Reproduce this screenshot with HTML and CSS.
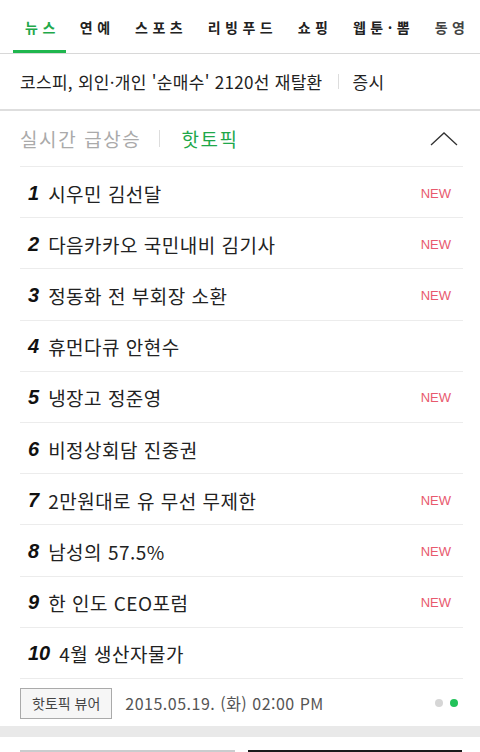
FILE: index.html
```html
<!DOCTYPE html>
<html lang="ko">
<head>
  <meta charset="UTF-8" />
  <meta name="viewport" content="width=device-width, initial-scale=1.0" />
  <title>뉴스</title>
  <link rel="stylesheet" href="styles.css">
</head>
<body>
  <nav class="tabs">
    <a class="tab active">뉴스</a>
    <a class="tab">연예</a>
    <a class="tab">스포츠</a>
    <a class="tab">리빙푸드</a>
    <a class="tab">쇼핑</a>
    <a class="tab">웹툰·뽐</a>
    <a class="tab fade">동영</a>
  </nav>

  <div class="headline">
    <span class="title">코스피, 외인·개인 '순매수' 2120선 재탈환</span>
    <span class="bar"></span>
    <span class="cat">증시</span>
  </div>

  <section class="hot">
    <div class="hot-head">
      <span class="off">실시간 급상승</span>
      <span class="bar"></span>
      <span class="on">핫토픽</span>
      <svg class="chev" width="28" height="14" viewBox="0 0 28 14"><path d="M1 13 L14 1 L27 13" fill="none" stroke="#333" stroke-width="1.3"/></svg>
    </div>

    <ol class="rank">
      <li><b>1</b><span class="kw">시우민 김선달</span><em>NEW</em></li>
      <li><b>2</b><span class="kw">다음카카오 국민내비 김기사</span><em>NEW</em></li>
      <li><b>3</b><span class="kw">정동화 전 부회장 소환</span><em>NEW</em></li>
      <li><b>4</b><span class="kw">휴먼다큐 안현수</span></li>
      <li><b>5</b><span class="kw">냉장고 정준영</span><em>NEW</em></li>
      <li><b>6</b><span class="kw">비정상회담 진중권</span></li>
      <li><b>7</b><span class="kw">2만원대로 유 무선 무제한</span><em>NEW</em></li>
      <li><b>8</b><span class="kw">남성의 57.5%</span><em>NEW</em></li>
      <li><b>9</b><span class="kw">한 인도 CEO포럼</span><em>NEW</em></li>
      <li><b>10</b><span class="kw">4월 생산자물가</span></li>
    </ol>

    <div class="hot-foot">
      <button class="viewer">핫토픽 뷰어</button>
      <span class="date">2015.05.19. (화) 02:00 PM</span>
      <span class="dots"><i></i><i class="cur"></i></span>
    </div>
  </section>

  <div class="gap"></div>

  <div class="thumbs">
    <div class="thumb light"></div>
    <div class="thumb dark"></div>
  </div>
</body>
</html>
```

FILE: styles.css
```css
body {
  margin: 0;
  font-family: "Noto Sans CJK KR", "Noto Sans", sans-serif;
  color: #222;
  background: #fff;
  overflow: hidden;
}
.tabs {
  display: flex;
  height: 53px;
  border-bottom: 1px solid #d8d8d8;
  padding-left: 13px;
  white-space: nowrap;
  overflow: hidden;
}
.tab {
  display: flex;
  align-items: center;
  font-size: 14px;
  font-weight: bold;
  letter-spacing: 4.5px;
  color: #222;
  margin-right: 20.5px;
  border-bottom: 3px solid transparent;
  padding-top: 3px;
}
.tab.active {
  color: #1fa84a;
  border-bottom-color: #1fb64e;
  padding: 3px 6px 0 12px;
  margin-right: 14px;
}
.tab.fade { color: #444; }
.headline {
  display: flex;
  align-items: center;
  height: 55px;
  padding-left: 20px;
  border-bottom: 2px solid #dedede;
  font-size: 17px;
  letter-spacing: 0.3px;
}
.headline .bar {
  width: 1px;
  height: 15px;
  background: #ddd;
  margin: 0 14px 0 15px;
}
.hot {
  padding: 0 17px 0 20px;
}
.hot-head {
  display: flex;
  align-items: center;
  height: 55px;
  font-size: 19px;
  letter-spacing: 1.6px;
}
.hot-head .off { color: #aaa; }
.hot-head .on { color: #1fa84a; }
.hot-head .bar {
  width: 1px;
  height: 17px;
  background: #ddd;
  margin: 0 21px 0 18px;
}
.chev { margin-left: auto; margin-right: 5px; }
.rank {
  list-style: none;
  margin: 0;
  padding: 0;
}
.rank li {
  box-sizing: border-box;
  display: flex;
  align-items: center;
  height: 51.2px;
  border-top: 1px solid #ececec;
  font-size: 19px;
  padding-top: 2px;
}
.rank b {
  font-family: "Liberation Sans", Arial, sans-serif;
  font-style: italic;
  font-size: 20px;
  color: #111;
  margin: 0 9px 0 8px;
}
.rank .kw { flex: 1; letter-spacing: 0.5px; }
.rank em {
  font-style: normal;
  font-family: "Liberation Sans", Arial, sans-serif;
  font-size: 13px;
  color: #e8596e;
  margin-right: 12px;
}
.hot-foot {
  display: flex;
  align-items: center;
  height: 45px;
  border-top: 1px solid #ececec;
  padding-top: 2px;
}
.viewer {
  font-family: inherit;
  font-size: 14px;
  color: #444;
  background: #f6f6f6;
  border: 1px solid #aaa;
  height: 31px;
  padding: 0 11px;
  margin: 0;
}
.date {
  margin-left: 13px;
  font-size: 16px;
  letter-spacing: 0.5px;
  color: #555;
}
.dots {
  margin-left: auto;
  display: flex;
  gap: 7px;
  margin-right: 5px;
}
.dots i {
  width: 8px;
  height: 8px;
  border-radius: 50%;
  background: #d6d6d6;
}
.dots i.cur { background: #22c25a; }
.gap {
  height: 11px;
  background: #e9e9e9;
}
.thumbs {
  display: flex;
  justify-content: space-between;
  padding: 13px 18px 0 20px;
}
.thumb { width: 215px; height: 40px; }
.thumb.light { background: #c9ccce; }
.thumb.dark { background: #1a1a1a; width: 214px; }
```
